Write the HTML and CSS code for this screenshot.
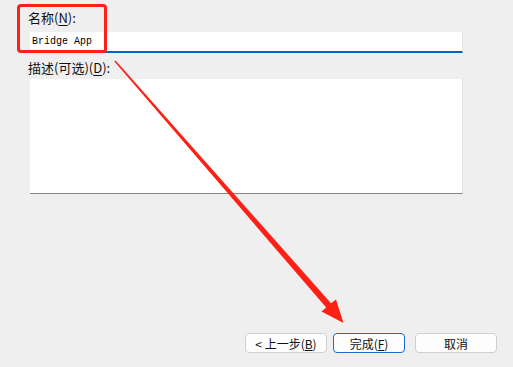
FILE: index.html
```html
<!DOCTYPE html>
<html lang="zh-CN">

<head>
	<meta charset="UTF-8">
	<meta name="viewport" content="width=device-width, initial-scale=1.0">
	<title>完成</title>
	<link rel="stylesheet" href="styles.css">
</head>

<body>
	<div class="dialog">
		<div class="fields">
			<label class="label" for="name">名称(<u>N</u>):</label>
			<input class="name" id="name" type="text" value="Bridge App">

			<label class="label label-desc" for="desc">描述(可选)(<u>D</u>):</label>
			<textarea class="desc" id="desc"></textarea>
		</div>

		<div class="actions">
			<button class="btn">&lt; 上一步(<u>B</u>)</button>
			<button class="btn btn-primary">完成(<u>F</u>)</button>
			<button class="btn btn-cancel">取消</button>
		</div>

		<!-- 标注 -->
		<div class="mark"></div>
		<svg class="arrow" width="513" height="367" viewBox="0 0 513 367">
			<polygon fill="#ff2015" points="115.6,60.4 331,303.2 336,299.5 343.5,323 321.5,311.5 326.2,307.6 114.4,61.6" />
		</svg>
	</div>
</body>

</html>
```

FILE: styles.css
```css
* {
	box-sizing: border-box;
}

body {
	margin: 0;
	background: #efefef;
	font-family: "Noto Sans CJK SC", "Liberation Sans", sans-serif;
	color: #111;
}

.dialog {
	position: relative;
	height: 367px;
	display: flex;
	flex-direction: column;
	padding: 9px 16px 14px 28px;
}

.fields {
	display: flex;
	flex-direction: column;
	width: 435px;
}

.label {
	font-size: 13px;
	line-height: 18px;
	height: 18px;
}

.label u {
	text-underline-offset: 2px;
}

.name {
	margin: 5px 0 0 2px;
	height: 21px;
	border: none;
	border-right: 1px solid #e2e2e2;
	border-bottom: 2px solid #0067c0;
	background: #fff;
	padding: 0 2px 1px;
	font-family: "Liberation Mono", monospace;
	font-size: 10px;
	color: #000;
	outline: none;
}

.label-desc {
	margin-top: 6px;
}

.desc {
	margin: 2px 0 0 2px;
	height: 115px;
	resize: none;
	border: none;
	border-right: 1px solid #e2e2e2;
	border-bottom: 1px solid #868686;
	background: #fff;
	outline: none;
}

.actions {
	margin-top: auto;
	display: flex;
	justify-content: flex-end;
	gap: 6px;
}

.btn {
	width: 82px;
	height: 20px;
	padding: 0;
	background: #fdfdfd;
	border: 1px solid #cfcfcf;
	border-radius: 4px;
	font-family: "Noto Sans CJK SC", sans-serif;
	font-size: 12px;
	line-height: 17px;
	color: #111;
}

.btn u {
	text-underline-offset: 1px;
}

.btn-primary {
	width: 72px;
	border-color: #1a6fc4;
}

.btn-cancel {
	margin-left: 4px;
}

.mark {
	position: absolute;
	left: 17px;
	top: 4px;
	width: 90px;
	height: 49px;
	border: 3px solid #ff2015;
	border-radius: 4px;
}

.arrow {
	position: absolute;
	left: 0;
	top: 0;
}
```
